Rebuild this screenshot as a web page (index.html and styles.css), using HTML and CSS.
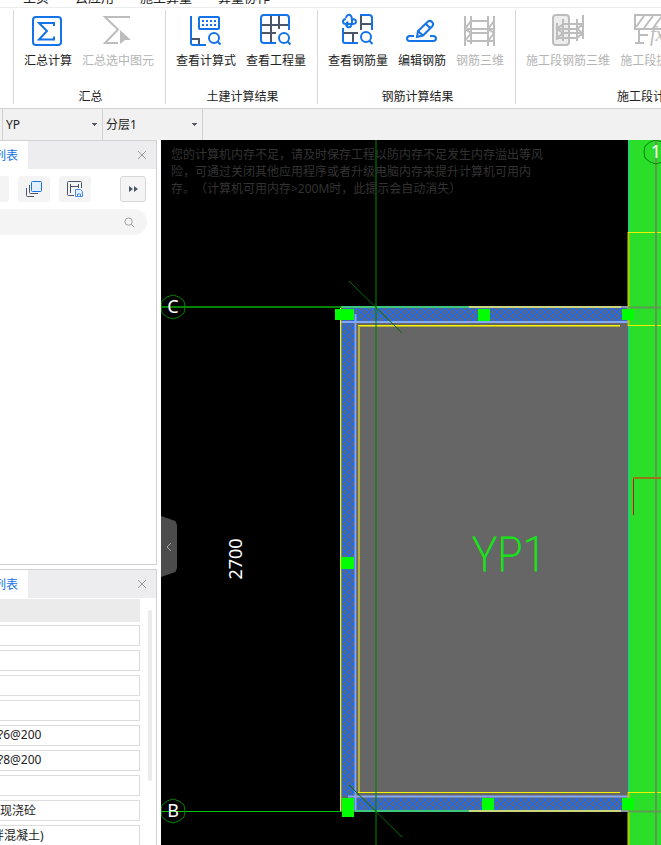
FILE: index.html
```html
<!DOCTYPE html>
<html lang="zh-CN">
<head>
<meta charset="utf-8">
<title>YP1</title>
<link rel="stylesheet" href="styles.css">
</head>
<body>
<nav class="menu">
  <a href="#">主页</a><a href="#">云应用</a><a href="#">施工算量</a><a href="#">算量协作</a>
</nav>

<header class="ribbon">
  <section class="group">
    <div class="tools">
      <button class="tool">
        <svg class="icon" viewBox="0 0 32 32"><rect x="1" y="3" width="28" height="28" rx="3"/><path d="M22 12V9H7l8 8-8 8.500h15v-3"/></svg>
        <span>汇总计算</span>
      </button>
      <button class="tool" disabled>
        <svg class="icon" viewBox="0 0 32 32"><path d="M28 3H3l13 12.500L3 29h13"/><path class="solid" d="M18 16l11 10h-6l-5 4z"/></svg>
        <span>汇总选中图元</span>
      </button>
    </div>
    <h2>汇总</h2>
  </section>
  <section class="group">
    <div class="tools">
      <button class="tool">
        <svg class="icon" viewBox="0 0 32 32"><path class="dark" d="M2 25h7v6"/><path d="M1 2v27q0 2 2 2h13"/><rect x="9" y="3" width="20" height="12" rx="1"/><path class="dots" d="M12 7h15M12 11h15"/><circle cx="24" cy="24" r="5"/><path d="M27.500 27.500l3 3"/></svg>
        <span>查看计算式</span>
      </button>
      <button class="tool">
        <svg class="icon" viewBox="0 0 32 32"><path class="dark" d="M2 11h26M2 19h14M11 2v27M19 2v13"/><path d="M16 29H4q-3 0-3-3V4q0-3 3-3h22q3 0 3 3v12"/><circle cx="24" cy="24" r="5"/><path d="M27.500 27.500l3 3"/></svg>
        <span>查看工程量</span>
      </button>
    </div>
    <h2>土建计算结果</h2>
  </section>
  <section class="group">
    <div class="tools">
      <button class="tool">
        <svg class="icon" viewBox="0 0 32 32"><path class="dark" d="M19 16V1M19 10h10M2 19h14M11 19v10"/><path d="M18 1h9q3 0 3 3v12M1 14v13q0 2 2 2h13"/><path d="M4 4q1-4 4-3 2 1 2 6t-2 6q-3 1-4-2M10 5q4 0 4 2.500T10 10H5M4 5Q1 5 1 7.500T4 10h4M6 7.500L4 10l2 3"/><circle cx="24" cy="23" r="5"/><path d="M27.500 27l3 3"/></svg>
        <span>查看钢筋量</span>
      </button>
      <button class="tool">
        <svg class="icon" viewBox="0 0 32 32"><path d="M8 22H4q-3 0-3 2.500T4 27h23q3 0 3-2.500T27 22h-3"/><path d="M11 23l1-6L22 7.500q2-1.500 4 .5t.5 4L17 21.500zM20 10l4 4M12 17l5 4.500"/></svg>
        <span>编辑钢筋</span>
      </button>
      <button class="tool" disabled>
        <svg class="icon" viewBox="0 0 32 32"><path d="M1 2v30M7 2v28M24 2v30M30 2v30M7 7h17M3 15h26M7 19h17M3 27h26M7 7l-6 8 6 4-6 8M30 7l-6 8 6 4-6 8"/></svg>
        <span>钢筋三维</span>
      </button>
    </div>
    <h2>钢筋计算结果</h2>
  </section>
  <section class="group wide">
    <div class="tools">
      <button class="tool" disabled>
        <svg class="icon" viewBox="0 0 32 32"><rect class="shade" x="1" y="1" width="16" height="30" rx="3"/><path d="M5 9v17M11 5v22M25 5v22M31 1v24M11 10h20M5 15h20M11 19h20M5 24h20M11 10l-6 5 6 4-6 5M31 10l-6 5 6 4-6 5"/></svg>
        <span>施工段钢筋三维</span>
      </button>
      <button class="tool" disabled>
        <svg class="icon" viewBox="0 0 32 32"><path d="M1 1h32v14H1zM2 13L10 2M10 14l9-12M19 14l9-12M5 15v14M1 29h9M5 21h9"/><text class="fx" x="16" y="27">fx</text></svg>
        <span>施工段提量</span>
      </button>
    </div>
    <h2>施工段计算结果</h2>
  </section>
</header>

<div class="filters">
  <select aria-label="构件"><option>YP</option></select>
  <select aria-label="分层"><option>分层1</option></select>
</div>

<main class="work">
  <aside class="side">
    <section class="panel components">
      <header class="tabs"><h3>列表</h3><button class="close" aria-label="关闭"><svg viewBox="0 0 10 10"><path d="M1 1l8 8M9 1L1 9"/></svg></button></header>
      <div class="bar">
        <button class="sq cut" aria-label="新建"></button>
        <button class="sq" aria-label="复制"><svg viewBox="0 0 16 16"><path d="M3.500 4v7.500q0 1 1 1H12M.5 7v7.500q0 1 1 1H8"/><rect class="blue" x="5.500" y=".5" width="10" height="10" rx="1"/></svg></button>
        <button class="sq" aria-label="存档"><svg viewBox="0 0 16 16"><path d="M7 14.500H1.500q-1 0-1-1v-12q0-1 1-1h12q1 0 1 1V7M3.500 3v9M3.500 5.500h8M11.500 3v4"/><path class="save" d="M8.500 8.500h5l2 2v5h-7zM10.500 15v-2h3v2"/></svg></button>
        <button class="sq more" aria-label="更多"><svg viewBox="0 0 16 16"><path class="fill" d="M4 5l4 3-4 3zM9 5l4 3-4 3z"/></svg></button>
      </div>
      <label class="search"><input type="search" aria-label="搜索"><svg viewBox="0 0 12 12"><circle cx="5" cy="5" r="4"/><path d="M8 8l3 3"/></svg></label>
    </section>
    <section class="panel props">
      <header class="tabs"><h3>列表</h3><button class="close" aria-label="关闭"><svg viewBox="0 0 10 10"><path d="M1 1l8 8M9 1L1 9"/></svg></button></header>
      <div class="scroller">
        <div class="rows">
          <div class="head"></div>
          <input aria-label="属性1"><input aria-label="属性2"><input aria-label="属性3"><input aria-label="属性4">
          <input class="shift" aria-label="属性5" value="?6@200">
          <input class="shift" aria-label="属性6" value="?8@200">
          <input aria-label="属性7">
          <input aria-label="属性8" value="现浇砼">
          <input class="shift-more" aria-label="属性9" value="拌混凝土)">
        </div>
        <div class="thumb"></div>
      </div>
    </section>
  </aside>

  <section class="view">
    <p class="notice">您的计算机内存不足，请及时保存工程以防内存不足发生内存溢出等风险，可通过关闭其他应用程序或者升级电脑内存来提升计算机可用内存。（计算机可用内存&gt;200M时，此提示会自动消失）</p>
    <svg class="drawing">
      <defs>
        <pattern id="hatch" x="341" y="308" width="8" height="8" patternUnits="userSpaceOnUse">
          <rect width="8" height="8" fill="#666"/>
          <path d="M-1-1l10 10M9-1L-1 9" stroke="#176bff" stroke-width="1.500"/>
          <path d="M3 0h2M3 8h2M0 3v2M8 3v2" stroke="#176bff" stroke-width="1"/>
        </pattern>
      </defs>
      <g transform="translate(-161 -140)" fill="none">
        <rect x="340" y="307" width="288" height="505" fill="#666"/>
        <path d="M628 140h2000v2000H628z" fill="#2ade2a"/>
        <rect x="342" y="308" width="286" height="13" fill="url(#hatch)"/>
        <rect x="342" y="323" width="13" height="474" fill="url(#hatch)"/>
        <rect x="342" y="798" width="286" height="12" fill="url(#hatch)"/>
        <path d="M341 322h287M355.500 314v497M348 796.500h280" stroke="#82a8fa" stroke-width="2"/>
        <path d="M357 323v472" stroke="#666" stroke-width="1"/>
        <path d="M359 325v467" stroke="#b5b032" stroke-width="2"/>
        <path d="M358 326.500h262" stroke="#b5b032"/>
        <path d="M358 325.500h262M358 792.500h262M340.500 307v504" stroke="#f4f400"/>
        <path d="M341.500 323v488" stroke="#6a8ac0"/>
        <path d="M161 307h180" stroke="#008500" stroke-width="2"/>
        <path d="M161 811.500h180" stroke="#00c400"/>
        <path d="M341 307h128M355 811h114" stroke="#3cc878" stroke-width="2"/>
        <path d="M469 307h152M469 811h152" stroke="#cbd77b" stroke-width="2"/>
        <path d="M621 307h7M621 811h7" stroke="#8792b5" stroke-width="2"/>
        <path d="M628.500 140v705" stroke="#14c8b4"/>
        <path d="M628.500 232v94M628.500 792v53" stroke="#b4cc00" stroke-width="2"/>
        <path d="M628 232.500h2000M628 325.500h2000M628 792.500h2000" stroke="#eef000"/>
        <path d="M628 307.500h2000M628 811.500h2000M656 140v2000" stroke="#5f9a50" stroke-width="2"/>
        <path d="M633.500 478v37" stroke="#d80000"/><path d="M633 478h2000" stroke="#9c7418" stroke-width="2"/>
        <g fill="#00ff00">
          <path d="M335 309h19v11h-19zM478 309h12v12h-12zM622 309h12v11h-12zM341 557h13v12h-13zM342 798h12v19h-12zM482 798h12v12h-12zM622 798h12v12h-12z"/>
        </g>
        <path d="M376 140v2000" stroke="#008000" stroke-opacity=".55" stroke-width="2"/>
        <path d="M349 281l53 52M349 785l53 52" stroke="#006e00"/>
        <g stroke="#008200">
          <path id="bubble" d="M173 295l6 2 5 4 1 6-1 6-5 4-6 2-6-2-5-4-1-6 1-6 5-4z"/>
          <use href="#bubble" y="504"/>
          <use href="#bubble" x="483" y="-155"/>
        </g>
        <g class="axis">
          <text x="173" y="313">C</text>
          <text x="173" y="817">B</text>
          <text x="656" y="158">1</text>
          <text transform="translate(242 559) rotate(-90)">2700</text>
        </g>
        <text class="part" x="509" y="571">YP1</text>
      </g>
    </svg>
    <button class="fold" aria-label="收起"><svg viewBox="0 0 6 10"><path d="M5 1L1 5l4 4"/></svg></button>
  </section>
</main>
</body>
</html>
```
FILE: styles.css
```css
* { box-sizing: border-box; }

body {
  margin: 0;
  height: 100vh;
  overflow: hidden;
  display: flex;
  flex-direction: column;
  background: #fff;
  color: #222;
  font: 12px/16px "Noto Sans", "Noto Sans CJK SC", sans-serif;
}

button, input, select { font: inherit; color: inherit; margin: 0; padding: 0; border: 0; background: none; }
h2, h3, p { margin: 0; font-size: 12px; font-weight: 400; }

.menu {
  flex: none;
  display: flex;
  align-items: flex-end;
  gap: 26px;
  height: 8px;
  padding: 0 23px 2px;
  overflow: hidden;
  border-bottom: 1px solid #ececec;
  font-size: 13px;
  white-space: nowrap;
}
.menu a { color: inherit; text-decoration: none; }

.ribbon {
  flex: none;
  display: flex;
  height: 101px;
  padding: 2px 0 4px 13px;
  overflow: hidden;
  border-bottom: 1px solid #d2d2d2;
}
.group {
  flex: none;
  display: flex;
  flex-direction: column;
  gap: 20px;
  padding: 4px 11px 0 10px;
  border-left: 1px solid #d8d8d8;
}
.group h2 { padding-left: 3px; text-align: center; }
.wide { min-width: 285px; }
.tools { display: flex; gap: 10px; }
.tool { display: flex; flex-direction: column; align-items: center; gap: 7px; white-space: nowrap; }
.tool:disabled { color: #b4b4b4; }

svg { display: block; fill: none; }
.icon { width: 32px; height: 32px; overflow: visible; stroke: #1473e6; stroke-width: 2; }
.icon .dark { stroke: #4d5669; }
.icon .dots { stroke-dasharray: 2 2; }
.tool:disabled .icon { stroke: #bdbdbd; }
.icon .solid { fill: #bdbdbd; stroke: none; }
.icon .shade { fill: #ededed; }
.icon .fx { fill: #bdbdbd; stroke: none; font: italic 20px "Liberation Serif", serif; }

.filters { flex: none; display: flex; height: 31px; padding-left: 2px; background: #f1f1f1; }
.filters select {
  width: 100px;
  padding: 0 3px;
  appearance: none;
  border-left: 1px solid #d2d2d2;
  background:
    linear-gradient(#555b66 0 0) right 5px top 14px / 5px 1px no-repeat,
    linear-gradient(#555b66 0 0) right 6px top 15px / 3px 1px no-repeat,
    linear-gradient(#555b66 0 0) right 7px top 16px / 1px 1px no-repeat;
}
.filters::after { content: ""; border-left: 1px solid #d2d2d2; }

.work { flex: 1; display: flex; min-height: 0; }
.side { flex: none; display: flex; flex-direction: column; gap: 4px; width: 161px; padding-right: 4px; }
.panel { border: solid #d2d2d2; border-width: 1px 1px 1px 0; }
.components { flex: 425; min-height: 0; }
.props { flex: 276; display: flex; flex-direction: column; min-height: 0; overflow: hidden; border-bottom: 0; }

.tabs { flex: none; display: flex; align-items: center; justify-content: space-between; height: 28px; padding-right: 9px; background: #ededf0; }
.tabs h3 {
  display: flex;
  align-items: center;
  justify-content: flex-end;
  width: 28px;
  height: 100%;
  padding: 2px 10px 0 0;
  overflow: hidden;
  background: #fff;
  color: #1473e6;
  white-space: nowrap;
}
.close svg { width: 10px; height: 10px; stroke: #999; }

.bar { display: flex; gap: 9px; padding: 7px 10px 7px 0; }
.sq { display: grid; place-items: center; width: 32px; height: 26px; border-radius: 3px; background: #f4f4f4; }
.sq svg { width: 16px; height: 16px; stroke: #4d5669; }
.sq .blue { fill: #e3efff; stroke: #1473e6; }
.sq .save { fill: #e3efff; stroke: #4a8be0; }
.sq .fill { fill: #4d5669; stroke: none; }
.cut { width: 9px; border-radius: 0 3px 3px 0; }
.more { width: 26px; margin-left: auto; border: 1px solid #d8d8d8; }

.search { display: flex; align-items: center; height: 26px; margin-right: 9px; padding-right: 12px; border-radius: 0 13px 13px 0; background: #f4f4f4; }
.search input { flex: 1; min-width: 0; appearance: none; outline: 0; }
.search svg { width: 11px; height: 11px; stroke: #999; }

.scroller { flex: 1; display: flex; gap: 8px; min-height: 0; padding-top: 1px; }
.rows { flex: none; display: flex; flex-direction: column; gap: 4px; width: 140px; }
.head { flex: none; height: 23px; margin-bottom: -1px; background: #ebebeb; }
.rows input { flex: none; width: 100%; height: 21px; padding-bottom: 2px; border: solid #dcdcdc; border-width: 1px 1px 1px 0; background: #fff; }
.rows .shift { text-indent: -2px; }
.rows .shift-more { text-indent: -8px; }
.thumb { width: 4px; height: 171px; margin-top: 11px; border-radius: 2px; background: #ebebeb; }

.view { position: relative; flex: 1; min-width: 0; overflow: hidden; background: #000; }
.drawing { width: 100%; height: 100%; }
.notice { position: absolute; top: 6px; left: 10px; width: 375px; color: #333; line-height: 17px; text-spacing-trim: space-all; }
.axis { fill: #fff; font-size: 18px; text-anchor: middle; }
.part { fill: #14e614; stroke: #14e614; stroke-width: 1px; font: 100 48px "Roboto Condensed", "Liberation Sans Narrow", Lato, sans-serif; text-anchor: middle; }
.fold {
  position: absolute;
  top: 376px;
  left: 0;
  display: grid;
  place-items: center;
  width: 16px;
  height: 61px;
  background: #4c4c4c;
  clip-path: polygon(0 0, 90% 5px, 100% 9px, 100% 52px, 90% 56px, 0 100%);
}
.fold svg { width: 6px; height: 10px; stroke: #aaa; }
```
